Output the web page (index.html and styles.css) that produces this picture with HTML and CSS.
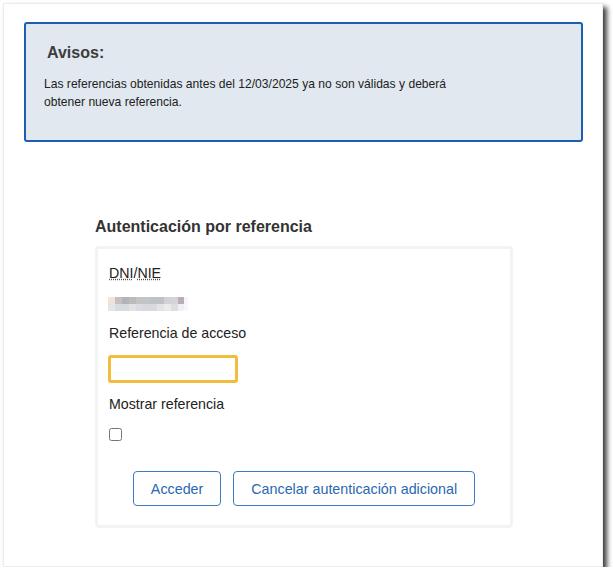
FILE: index.html
```html
<!DOCTYPE html>
<html lang="es">
<head>
<meta charset="utf-8">
<title>Autenticación por referencia</title>
<link rel="stylesheet" href="styles.css">
</head>
<body>
<div class="panel">
  <div class="alert">
    <h2 class="alert-title">Avisos:</h2>
    <p class="alert-text">Las referencias obtenidas antes del 12/03/2025 ya no son válidas y deberá obtener nueva referencia.</p>
  </div>
  <section class="auth">
    <h3 class="auth-title">Autenticación por referencia</h3>
    <div class="card">
      <div class="label"><abbr title="Documento Nacional de Identidad">DNI</abbr>/<abbr title="Número de Identidad de Extranjero">NIE</abbr></div>
      <div class="blurred" aria-hidden="true"></div>
      <label class="label label-ref" for="ref">Referencia de acceso</label>
      <input class="ref-input" id="ref" type="password">
      <label class="label label-show" for="show">Mostrar referencia</label>
      <input class="check" id="show" type="checkbox">
      <div class="actions">
        <button class="btn" type="button">Acceder</button>
        <button class="btn" type="button">Cancelar autenticación adicional</button>
      </div>
    </div>
  </section>
</div>
</body>
</html>
```
FILE: styles.css
```css
html, body {
  margin: 0;
  padding: 0;
  background: #ffffff;
}
body {
  font-family: "Liberation Sans", Arial, sans-serif;
  color: #222;
}
.panel {
  box-sizing: border-box;
  width: 600px;
  height: 564px;
  margin: 3px 0 0 3px;
  background: #fff;
  border: 1px solid #ededed;
  box-shadow: 4px 4px 5px rgba(0, 0, 0, 0.75);
  padding-top: 18px;
}
.alert {
  box-sizing: border-box;
  height: 120px;
  margin: 0 19px 0 20px;
  background: #e1e8f0;
  border: 2px solid #1b5fb3;
  border-radius: 3px;
  padding: 20px 18px 0 18px;
}
.alert-title {
  margin: 0 0 0 3px;
  font-size: 16px;
  line-height: 18px;
  font-weight: bold;
  color: #3c3c3c;
}
.alert-text {
  max-width: 415px;
  margin: 13px 0 0 0;
  font-size: 12.1px;
  line-height: 18px;
  color: #222;
}
.auth {
  width: 418px;
  margin: 76px 0 0 91px;
}
.auth-title {
  margin: 0;
  font-size: 16px;
  line-height: 18px;
  font-weight: bold;
  color: #333;
}
.card {
  box-sizing: border-box;
  margin-top: 10px;
  border: 3px solid #f3f3f3;
  border-radius: 4px;
  padding: 14px 10px 19px 10px;
  display: flex;
  flex-direction: column;
  align-items: flex-start;
}
.label {
  display: block;
  font-size: 14.2px;
  line-height: 20px;
  color: #222;
  padding-left: 1px;
}
abbr[title] {
  text-decoration: underline dotted;
  text-decoration-color: #555;
}
.blurred {
  width: 80px;
  height: 14px;
  margin-top: 14px;
  background:
    linear-gradient(to right, #efe3dc 0 7px, #c4c0c4 7px 14px, #b4b3bd 14px 21px, #c0b9bb 21px 28px, #c4c4c0 28px 35px, #c0c4cb 35px 42px, #c0c1c5 42px 49px, #c1c1c4 49px 56px, #d2d2d6 56px 63px, #d5d3d6 63px 70px, #b8aeb9 70px 76px, #f4f5fa 76px 80px) top / 100% 7px no-repeat,
    linear-gradient(to right, #e4e5e8 0 7px, #d8dce0 7px 14px, #d8dadc 14px 21px, #e2e2e2 21px 28px, #d9dce0 28px 35px, #d9d9dd 35px 42px, #dadadd 42px 49px, #e4e4e6 49px 56px, #ecebe9 56px 63px, #dedddf 63px 70px, #eff0f4 70px 76px, #f6f7fa 76px 80px) bottom / 100% 7px no-repeat;
}
.label-ref {
  margin-top: 12px;
}
.ref-input {
  box-sizing: border-box;
  width: 130px;
  height: 28px;
  margin: 12px 0 0 0;
  border: 3px solid #f2bd3f;
  border-radius: 3px;
  background: #fff;
  padding: 0 4px;
  outline: none;
}
.label-show {
  margin-top: 11px;
}
.check {
  width: 13px;
  height: 13px;
  margin: 14px 0 0 1px;
}
.actions {
  align-self: stretch;
  display: flex;
  justify-content: center;
  gap: 12px;
  margin-top: 30px;
}
.btn {
  box-sizing: border-box;
  height: 35px;
  padding: 0 17px;
  background: #fff;
  border: 1px solid #3d7bc3;
  border-radius: 4px;
  color: #2a67b0;
  font-family: "Liberation Sans", Arial, sans-serif;
  font-size: 14.3px;
  cursor: pointer;
}
```
